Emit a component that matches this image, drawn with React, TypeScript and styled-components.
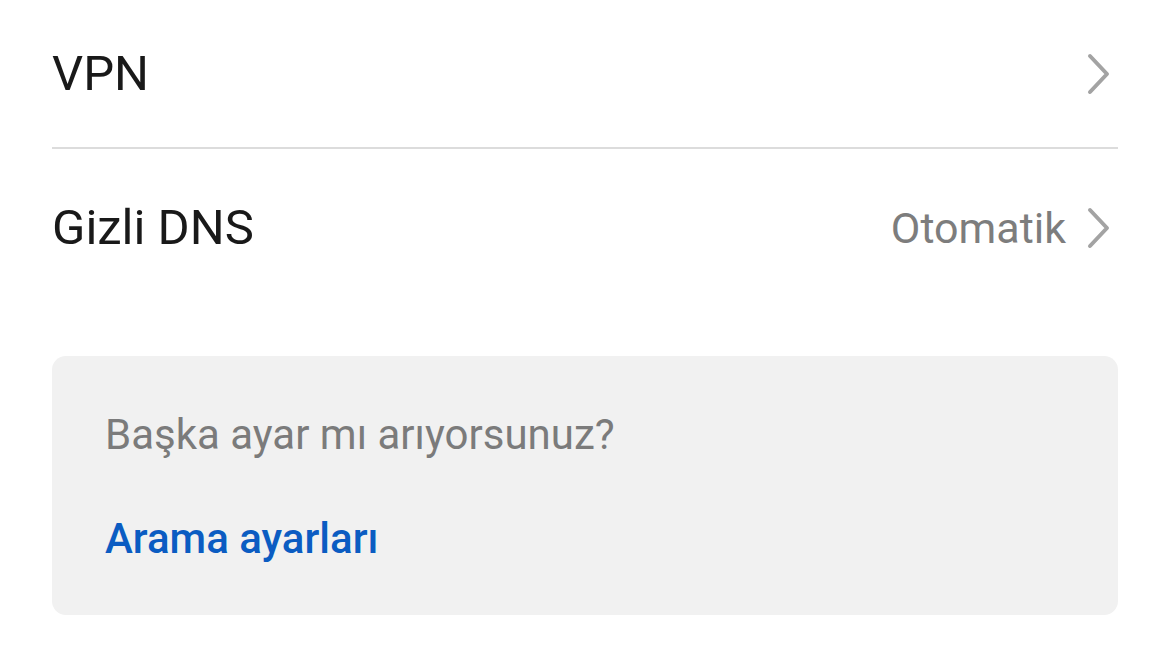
import React from 'react'
import styled, { createGlobalStyle } from 'styled-components'

const GlobalStyle = createGlobalStyle`
body{
  margin: 0;
  background: #ffffff;
  font-family: Roboto, "Noto Sans", "Liberation Sans", sans-serif;
}
`

const Rows = [
    { title: "VPN", value: "" },
    { title: "Gizli DNS", value: "Otomatik" },
]

const App = () => {
  return (
    <div>
        <GlobalStyle/>
        <Container>
            <List>
                {
                    Rows.map((props, i)=>(
                        <Row key={i} last={i === Rows.length - 1}>
                            <Title>{props.title}</Title>
                            <Right>
                                {props.value ? <Value>{props.value}</Value> : null}
                                <Chevron width="26" height="42" viewBox="0 0 26 42">
                                    <path d="M4 3 L21 21 L4 39" fill="none" stroke="#a3a3a3" strokeWidth="4" strokeLinecap="round" strokeLinejoin="round"/>
                                </Chevron>
                            </Right>
                        </Row>
                    ))
                }
            </List>
            <Card>
                <Hint>Başka ayar mı arıyorsunuz?</Hint>
                <Link>Arama ayarları</Link>
            </Card>
        </Container>
    </div>
  )
}

export default App

const Link = styled.div`
font-size: 42px;
font-weight: 500;
color: #0b5cc2;
margin-top: 54px;
line-height: 50px;
`
const Hint = styled.div`
font-size: 42px;
color: #7b7b7b;
line-height: 50px;
`
const Card = styled.div`
margin-top: 50px;
background-color: #f1f1f1;
border-radius: 14px;
height: 259px;
box-sizing: border-box;
padding: 54px 53px 0 53px;
`
const Chevron = styled.svg`
margin-left: 20px;
margin-right: 6px;
display: block;
`
const Value = styled.span`
font-size: 43px;
color: #7d7d7d;
`
const Right = styled.div`
display: flex;
align-items: center;
`
const Title = styled.span`
font-size: 49px;
color: #191919;
`
const Row = styled.div<{last?: boolean}>`
display: flex;
align-items: center;
justify-content: space-between;
height: ${({last})=> last ? "157px" : "147px"};
border-bottom: ${({last})=> last ? "none" : "2px solid #dcdcdc"};
`
const List = styled.div`
display: flex;
flex-direction: column;
`
const Container = styled.div`
padding: 0 52px 0 52px;
width: 1170px;
box-sizing: border-box;
display: flex;
flex-direction: column;
`
